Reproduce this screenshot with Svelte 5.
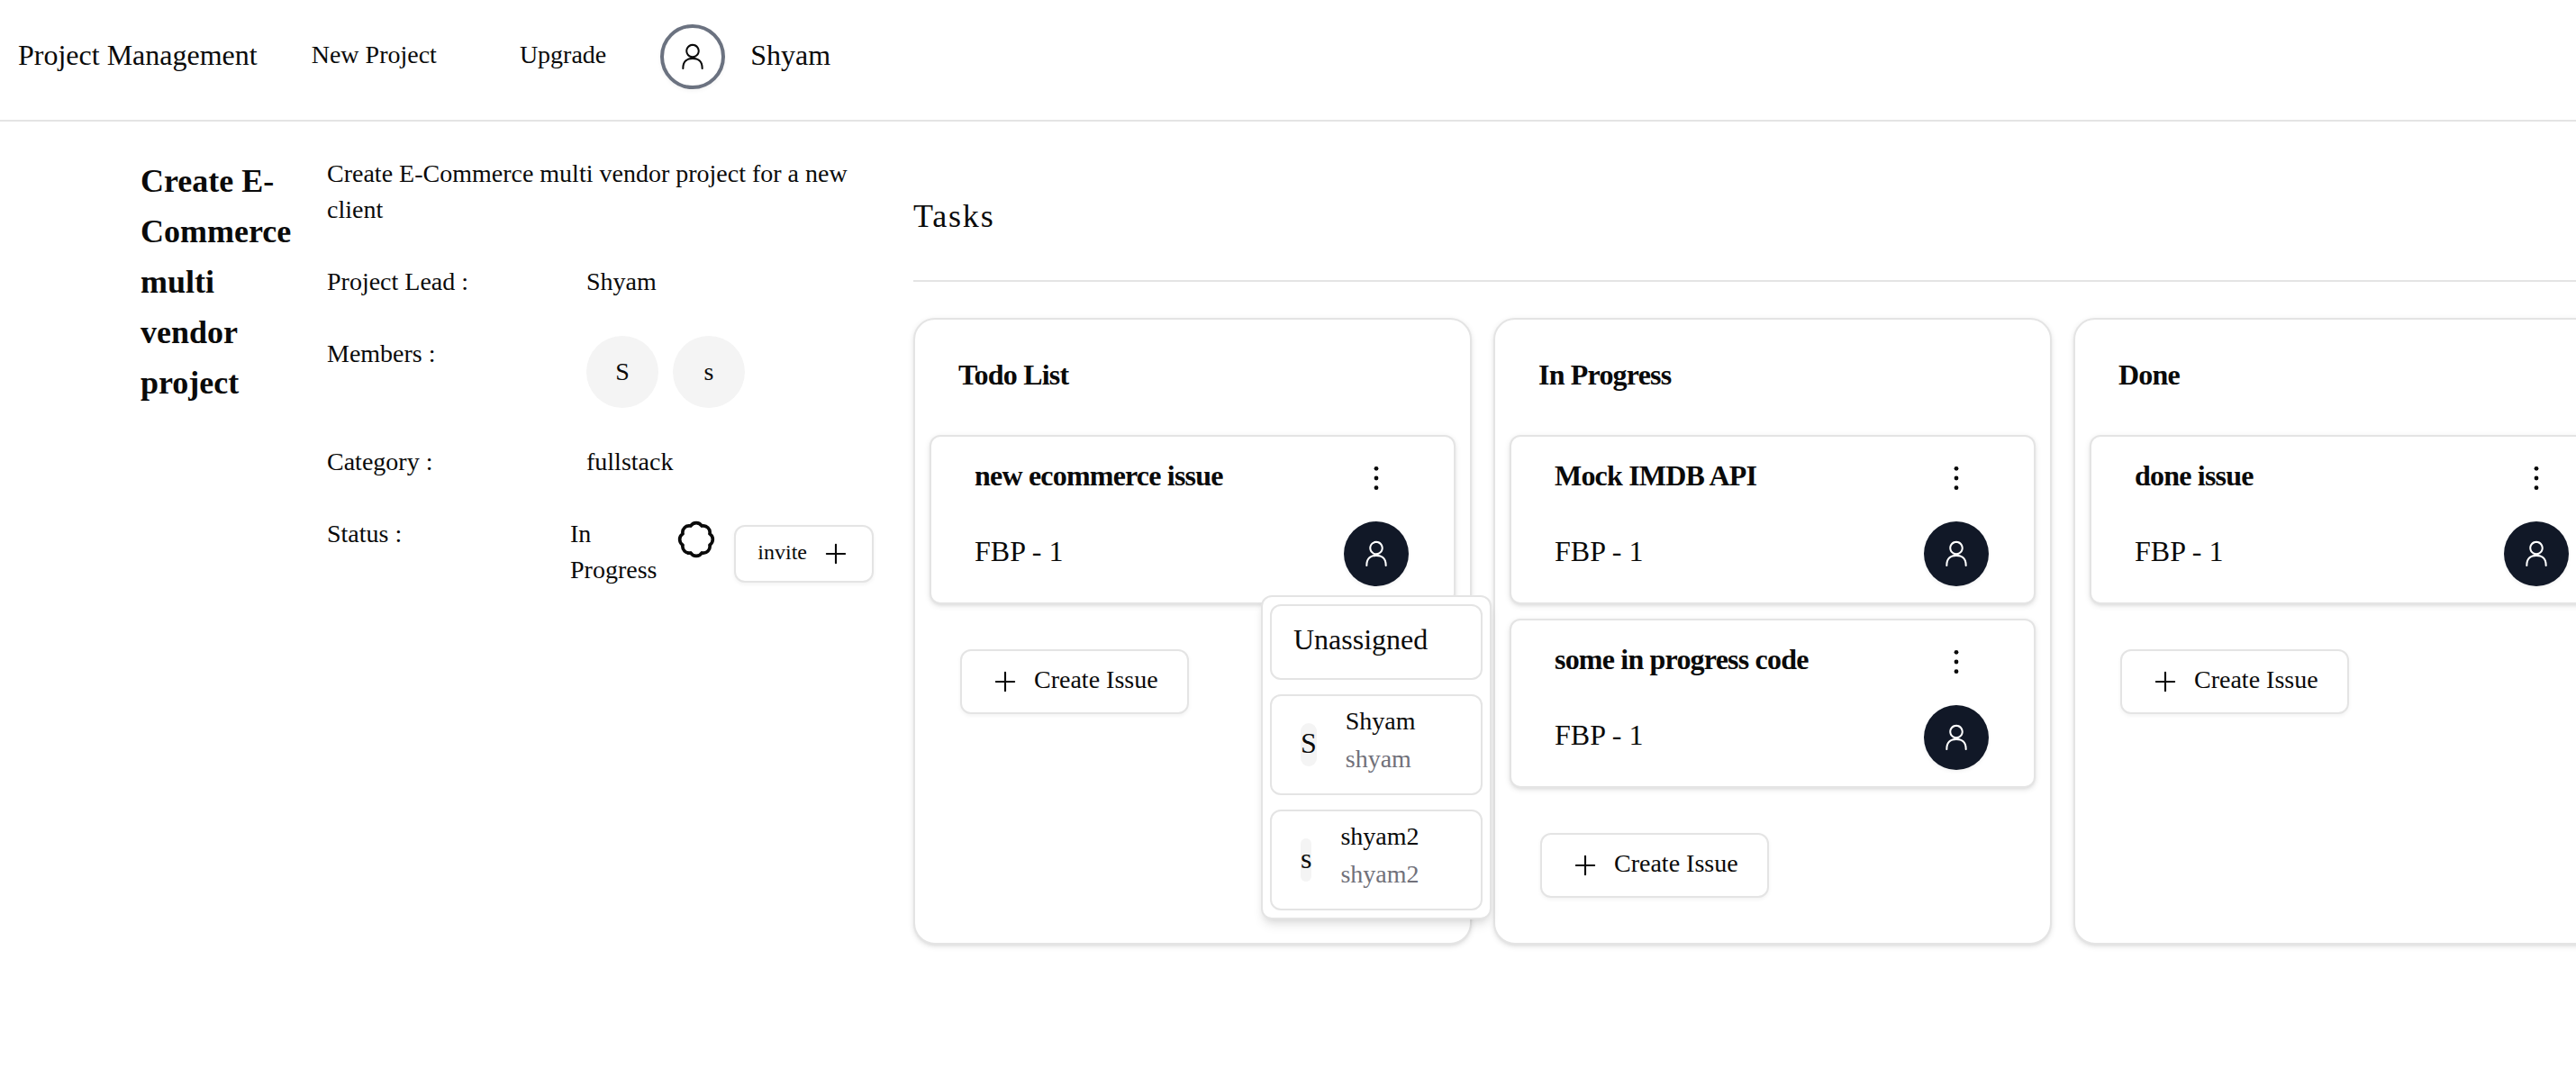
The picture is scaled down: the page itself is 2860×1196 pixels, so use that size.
<script>
  const navLinks = ['New Project', 'Upgrade'];
  const members = ['Shyam', 'shyam2'];

  const people = [
    { name: 'Shyam', handle: 'shyam' },
    { name: 'shyam2', handle: 'shyam2' },
  ];

  const columns = [
    { title: 'Todo List', issues: ['new ecommerce issue'] },
    { title: 'In Progress', issues: ['Mock IMDB API', 'some in progress code'] },
    { title: 'Done', issues: ['done issue'] },
  ];

  let openIssue = $state('new ecommerce issue');

  function toggle(issue) {
    openIssue = openIssue === issue ? '' : issue;
  }
</script>

{#snippet person()}
  <svg class="icon" viewBox="0 0 15 15" fill="currentColor" aria-hidden="true">
    <path
      fill-rule="evenodd"
      clip-rule="evenodd"
      d="M7.5 0.875C5.49797 0.875 3.875 2.49797 3.875 4.5C3.875 6.15288 4.98124 7.54738 6.49373 7.98351C5.2997 8.12901 4.27557 8.55134 3.50407 9.31167C2.52216 10.2794 2.02502 11.72 2.02502 13.5999C2.02502 13.8623 2.23769 14.0749 2.50002 14.0749C2.76236 14.0749 2.97502 13.8623 2.97502 13.5999C2.97502 11.8799 3.42786 10.7206 4.17091 9.9883C4.91536 9.25463 6.02674 8.87499 7.49995 8.87499C8.97317 8.87499 10.0846 9.25463 10.8291 9.98831C11.5721 10.7206 12.025 11.8799 12.025 13.5999C12.025 13.8623 12.2376 14.0749 12.5 14.0749C12.7623 14.075 12.975 13.8623 12.975 13.6C12.975 11.72 12.4778 10.2794 11.4959 9.31166C10.7244 8.55135 9.70025 8.12903 8.50625 7.98352C10.0187 7.5474 11.125 6.15289 11.125 4.5C11.125 2.49797 9.50205 0.875 7.5 0.875ZM4.825 4.5C4.825 3.02264 6.02264 1.825 7.5 1.825C8.97736 1.825 10.175 3.02264 10.175 4.5C10.175 5.97736 8.97736 7.175 7.5 7.175C6.02264 7.175 4.825 5.97736 4.825 4.5Z"
    />
  </svg>
{/snippet}

{#snippet plus()}
  <svg class="icon" viewBox="0 0 15 15" fill="none" stroke="currentColor" stroke-linecap="round" aria-hidden="true">
    <path d="M7.5 2.75V12.25M2.75 7.5H12.25" />
  </svg>
{/snippet}

<div class="page">
  <header class="topbar">
    <a class="brand label" href="/">Project Management</a>
    {#each navLinks as link}
      <button class="nav"><span class="label">{link}</span></button>
    {/each}
    <button class="profile" aria-label="Account menu">{@render person()}</button>
    <span class="user label">Shyam</span>
  </header>

  <main>
    <section class="project">
      <h1>Create E-Commerce multi vendor project</h1>
      <div class="details">
        <p>Create E-Commerce multi vendor project for a new client</p>
        <div class="field">
          <span>Project Lead :</span>
          <span>Shyam</span>
        </div>
        <div class="field">
          <span>Members :</span>
          <div class="members">
            {#each members as member}
              <span class="member">{member[0]}</span>
            {/each}
          </div>
        </div>
        <div class="field">
          <span>Category :</span>
          <span>fullstack</span>
        </div>
        <div class="field status">
          <span>Status :</span>
          <span class="state">In Progress</span>
          <svg class="badge" viewBox="0 0 24 24" fill="none" stroke="currentColor" stroke-width="2" stroke-linecap="round" stroke-linejoin="round" aria-hidden="true">
            <path d="M3.85 8.62a4 4 0 0 1 4.78-4.77 4 4 0 0 1 6.74 0 4 4 0 0 1 4.78 4.78 4 4 0 0 1 0 6.74 4 4 0 0 1-4.77 4.78 4 4 0 0 1-6.75 0 4 4 0 0 1-4.78-4.77 4 4 0 0 1 0-6.76Z" />
          </svg>
          <button class="outline invite"><span class="label">invite</span>{@render plus()}</button>
        </div>
      </div>
    </section>

    <section class="tasks">
      <h2>Tasks</h2>
      <div class="board">
        {#each columns as column}
          <section class="column">
            <h3>{column.title}</h3>
            <div class="issues">
              {#each column.issues as issue}
                <article class="issue">
                  <div class="row heading">
                    <h4 class="label">{issue}</h4>
                    <button class="more" aria-label="Issue options">
                      <svg class="icon" viewBox="0 0 15 15" fill="currentColor" aria-hidden="true">
                        <circle cx="7.5" cy="2.5" r="1.125" />
                        <circle cx="7.5" cy="7.5" r="1.125" />
                        <circle cx="7.5" cy="12.5" r="1.125" />
                      </svg>
                    </button>
                  </div>
                  <div class="row">
                    <span class="label">FBP - 1</span>
                    <div class="assignee">
                      <button class="avatar" aria-label="Assign issue" aria-expanded={openIssue === issue} onclick={() => toggle(issue)}>
                        {@render person()}
                      </button>
                      {#if openIssue === issue}
                        <div class="menu">
                          <button class="option"><span class="label">Unassigned</span></button>
                          {#each people as p}
                            <button class="option user-option">
                              <span class="initial">{p.name[0]}</span>
                              <span class="names">
                                <span>{p.name}</span>
                                <span class="handle">{p.handle}</span>
                              </span>
                            </button>
                          {/each}
                        </div>
                      {/if}
                    </div>
                  </div>
                </article>
              {/each}
            </div>
            <div class="footer">
              <button class="outline create">{@render plus()}<span class="label">Create Issue</span></button>
            </div>
          </section>
        {/each}
      </div>
    </section>
  </main>
</div>

<style>
  :global(body) {
    background: #fff;
  }

  .page {
    --line: #e4e4e4;
    --shadow: 0 2px 6px rgba(0, 0, 0, 0.1), 0 2px 4px -2px rgba(0, 0, 0, 0.1);
    --shadow-sm: 0 2px 4px rgba(0, 0, 0, 0.05);
    overflow-x: clip;
    font-family: 'Liberation Serif', 'Times New Roman', serif;
    font-size: 28px;
    line-height: 40px;
    color: #0a0a0a;
  }

  .page * {
    box-sizing: border-box;
  }

  h1,
  h2,
  h3,
  h4,
  p {
    margin: 0;
  }

  button {
    display: flex;
    align-items: center;
    padding: 0;
    border: 0;
    background: none;
    color: inherit;
    font: inherit;
    cursor: pointer;
  }

  .icon {
    flex: none;
    width: 32px;
    height: 32px;
  }

  /* Lifts text so its x-height sits on the centre line of the row. */
  .label {
    padding-bottom: 4px;
  }

  .topbar {
    display: flex;
    align-items: center;
    gap: 28px;
    padding: 27px 20px 34px;
    border-bottom: 2px solid var(--line);
  }

  .brand,
  .user {
    font-size: 32px;
    color: inherit;
    text-decoration: none;
  }

  .nav {
    height: 72px;
    padding: 0 32px;
  }

  .profile,
  .avatar {
    justify-content: center;
    width: 72px;
    height: 72px;
    border-radius: 50%;
    box-shadow: var(--shadow-sm);
  }

  .profile {
    border: 4px solid #6b7280;
  }

  .avatar {
    background: #111827;
    color: #fff;
  }

  main {
    display: flex;
    gap: 44px;
    padding-left: 156px;
  }

  .project {
    display: flex;
    flex: none;
    gap: 40px;
    padding-top: 38px;
  }

  h1 {
    width: 167px;
    font-size: 36px;
    line-height: 56px;
  }

  .details {
    display: flex;
    flex-direction: column;
    gap: 40px;
    width: 607px;
  }

  .field {
    display: grid;
    grid-template-columns: 288px 1fr;
  }

  .members {
    display: flex;
    gap: 16px;
  }

  .member {
    display: grid;
    place-items: center;
    width: 80px;
    height: 80px;
    border-radius: 50%;
    background: #f4f4f4;
  }

  .status {
    grid-template-columns: 270px 118px 44px 1fr;
    align-items: start;
  }

  .state {
    width: 96px;
  }

  .badge {
    width: 44px;
    height: 44px;
    margin-top: 4px;
  }

  .outline {
    gap: 16px;
    border: 2px solid var(--line);
    border-radius: 12px;
    background: #fff;
    box-shadow: var(--shadow-sm);
  }

  .invite {
    justify-self: end;
    height: 64px;
    margin-top: 10px;
    padding: 0 24px;
    font-size: 24px;
  }

  .tasks {
    flex: 1;
    min-width: 0;
    padding-top: 85px;
  }

  h2 {
    padding-bottom: 51px;
    border-bottom: 2px solid var(--line);
    font-size: 36px;
    font-weight: 400;
    letter-spacing: 0.05em;
  }

  .board {
    display: flex;
    gap: 24px;
    padding: 40px 0;
  }

  .column {
    flex: none;
    width: 620px;
    border: 2px solid var(--line);
    border-radius: 24px;
    background: #fff;
    box-shadow: var(--shadow);
  }

  h3,
  h4 {
    font-size: 32px;
    line-height: 32px;
    letter-spacing: -0.025em;
  }

  h3 {
    padding: 45px 48px 51px;
  }

  .issues {
    display: grid;
    gap: 16px;
    padding: 0 16px;
  }

  .issue {
    display: grid;
    gap: 18px;
    padding: 16px 50px 18px 48px;
    border: 2px solid var(--line);
    border-radius: 12px;
    background: #fff;
    box-shadow: var(--shadow);
    font-size: 32px;
  }

  .issue .label {
    padding-bottom: 6px;
  }

  .row {
    display: flex;
    align-items: center;
    justify-content: space-between;
  }

  .heading {
    height: 60px;
  }

  .more {
    justify-content: center;
    width: 72px;
    height: 60px;
  }

  .assignee {
    position: relative;
  }

  .menu {
    position: absolute;
    z-index: 10;
    top: 82px;
    left: -92px;
    display: grid;
    gap: 16px;
    width: 256px;
    padding: 8px;
    border: 2px solid var(--line);
    border-radius: 12px;
    background: #fff;
    box-shadow: 0 8px 12px -2px rgba(0, 0, 0, 0.1), 0 4px 8px -4px rgba(0, 0, 0, 0.1);
  }

  .option {
    height: 84px;
    padding: 0 24px;
    border: 2px solid var(--line);
    border-radius: 12px;
    text-align: left;
  }

  .user-option {
    gap: 32px;
    height: 112px;
    padding: 7px 32px;
  }

  .initial {
    height: 48px;
    border-radius: 24px;
    background: #f4f4f4;
    line-height: 44px;
  }

  .names {
    display: grid;
    align-self: flex-start;
    font-size: 28px;
    line-height: 42px;
  }

  .handle {
    color: #71717a;
  }

  .footer {
    padding: 50px;
  }

  .create {
    height: 72px;
    padding: 0 32px;
  }
</style>
